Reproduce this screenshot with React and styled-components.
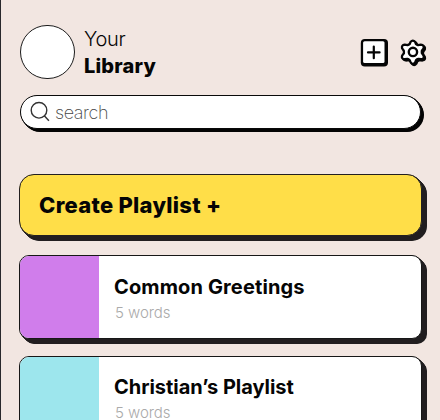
import React from "react";
import styled, { createGlobalStyle } from "styled-components";

const GlobalStyle = createGlobalStyle`
  *, *::before, *::after { box-sizing: border-box; }
  body { margin: 0; overflow: hidden; background: #f2e6e1; }
`;

const extrude = (depth, color) =>
  Array.from({ length: depth * 2 }, (_, i) => `${(i + 1) / 2}px ${(i + 1) / 2}px 0 ${color}`).join(", ");

const Screen = styled.main`
  height: 420px;
  overflow: hidden;
  padding: 24.5px 12px 0 18px;
  border-left: 1px solid #29282c;
  background: #f2e6e1;
  color: #050505;
  font-family: Inter, "Liberation Sans", sans-serif;
`;

const Header = styled.header`
  display: flex;
  align-items: flex-start;
  height: 70.5px;
  padding-left: 1px;
`;

const Avatar = styled.div`
  flex: none;
  width: 54.5px;
  height: 54.5px;
  border: 1px solid #1c1c1c;
  border-radius: 50%;
  background: #fff;
`;

const Heading = styled.h1`
  display: flex;
  flex-direction: column;
  margin: 1.5px 0 0 9.5px;
  font-size: 20px;
  line-height: 27px;
  font-weight: 300;
`;

const Line = styled.span`
  font-size: ${(p) => p.$size}px;
  font-weight: ${(p) => p.$weight};
  letter-spacing: ${(p) => p.$spacing}px;
`;

const Actions = styled.div`
  display: flex;
  gap: 10px;
  margin: 13.5px 0 0 auto;
`;

const IconButton = styled.button`
  display: flex;
  width: 29px;
  height: 30px;
  padding: 0;
  border: 0;
  background: none;
`;

const SearchBar = styled.label`
  display: flex;
  align-items: center;
  width: 401px;
  height: 33.5px;
  margin-left: 1px;
  padding-left: 9px;
  border: 1px solid #0a0a0a;
  border-radius: 17px;
  background: #fff;
  box-shadow: ${extrude(3, "#050505")};
`;

const SearchText = styled.span`
  margin: 2px 0 0 5px;
  font-size: 18px;
  font-weight: 200;
  letter-spacing: -0.4px;
  line-height: 22px;
  color: #444;
`;

const CreateButton = styled.button`
  display: flex;
  align-items: center;
  width: 403px;
  height: 61.5px;
  margin-top: 45.5px;
  padding: 1px 0 0 19px;
  border: 1px solid #221f20;
  border-radius: 15px;
  background: #ffde48;
  box-shadow: ${extrude(5, "#221f20")};
  color: #050505;
  font: 800 22px Inter, "Liberation Sans", sans-serif;
  letter-spacing: 0.27px;
`;

const Playlists = styled.section`
  display: flex;
  flex-direction: column;
  gap: 16.5px;
  margin-top: 19.5px;
`;

const Card = styled.article`
  display: flex;
  flex: none;
  width: 403px;
  height: 84px;
  overflow: hidden;
  border: 1px solid #171717;
  border-radius: 10px;
  background: #fff;
  box-shadow: ${extrude(5, "#221f20")};
`;

const Cover = styled.div`
  width: 79px;
  background: ${(p) => p.$color};
`;

const CardText = styled.div`
  padding: 17.5px 0 0 15px;
`;

const CardTitle = styled.h2`
  margin: 0;
  font-size: 20px;
  line-height: 26px;
  font-weight: 700;
  letter-spacing: ${(p) => p.$spacing}px;
`;

const WordCount = styled.p`
  margin: 3px 0 0 1px;
  font-size: 15px;
  line-height: 20px;
  font-weight: 300;
  letter-spacing: -0.05px;
  color: #aaa;
`;

function AddIcon() {
  return (
    <svg width="29" height="30" viewBox="0 0 29 30">
      <rect x="0.8" y="1" width="27.2" height="27.6" rx="4" fill="#050505" />
      <rect x="3.1" y="3.3" width="21.4" height="21.8" rx="1.5" fill="#fff" />
      <path d="M13.8 8.6v11.6M8 14.4h11.6" stroke="#050505" strokeWidth="2.2" strokeLinecap="round" />
    </svg>
  );
}

function GearIcon() {
  const gear =
    "M11.3 4.3Q13.5 1.7 15.7 4.3L16.5 6.4Q17.4 7 18.5 7.4L21.2 7Q24.7 7.4 23.8 10.5L22.2 12.7Q22 14.2 22.2 15.2L23.8 17.5Q24.8 20.5 21.5 21L18.8 20.6Q17.5 21 16.6 21.8L15.7 24Q13.5 26.8 11.4 24L10.4 21.8Q9.4 21 8.3 20.6L5.6 21Q2.2 20.5 3.2 17.5L4.9 15.3Q5 14.1 4.8 12.8L3.2 10.5Q2.3 7.4 5.7 7L8.4 7.4Q9.5 7 10.5 6.3Z";
  return (
    <svg width="29" height="30" viewBox="0 0 29 30">
      <g transform="translate(-0.2 -0.6) scale(1.04)">
        <path d={gear} transform="translate(1.2 1.2)" fill="#050505" stroke="#050505" strokeWidth="2.2" />
        <path d={gear} fill="#fff" stroke="#050505" strokeWidth="2.2" strokeLinejoin="round" />
        <circle cx="13.6" cy="14" r="4" fill="#fff" stroke="#050505" strokeWidth="2.3" />
      </g>
    </svg>
  );
}

function SearchIcon() {
  return (
    <svg width="20" height="21" viewBox="0 0 20 21" fill="none" stroke="#333" strokeWidth="1.4">
      <circle cx="9" cy="9.3" r="7.8" />
      <path d="m14.3 14.7 4.6 5" />
    </svg>
  );
}

const playlists = [
  { title: "Common Greetings", words: 5, color: "#d07deb", spacing: 0.13 },
  { title: "Christian’s Playlist", words: 5, color: "#9de6ed", spacing: -0.03 },
];

export default function App() {
  return (
    <>
      <GlobalStyle />
      <Screen>
        <Header>
          <Avatar />
          <Heading>
            <Line $size={20} $weight={300} $spacing={-0.3}>Your</Line>
            <Line $size={20} $weight={800} $spacing={0.2}>Library</Line>
          </Heading>
          <Actions>
            <IconButton aria-label="Add"><AddIcon /></IconButton>
            <IconButton aria-label="Settings"><GearIcon /></IconButton>
          </Actions>
        </Header>
        <SearchBar>
          <SearchIcon />
          <SearchText>search</SearchText>
        </SearchBar>
        <CreateButton>Create Playlist +</CreateButton>
        <Playlists>
          {playlists.map((p) => (
            <Card key={p.title}>
              <Cover $color={p.color} />
              <CardText>
                <CardTitle $spacing={p.spacing}>{p.title}</CardTitle>
                <WordCount>{p.words} words</WordCount>
              </CardText>
            </Card>
          ))}
        </Playlists>
      </Screen>
    </>
  );
}
